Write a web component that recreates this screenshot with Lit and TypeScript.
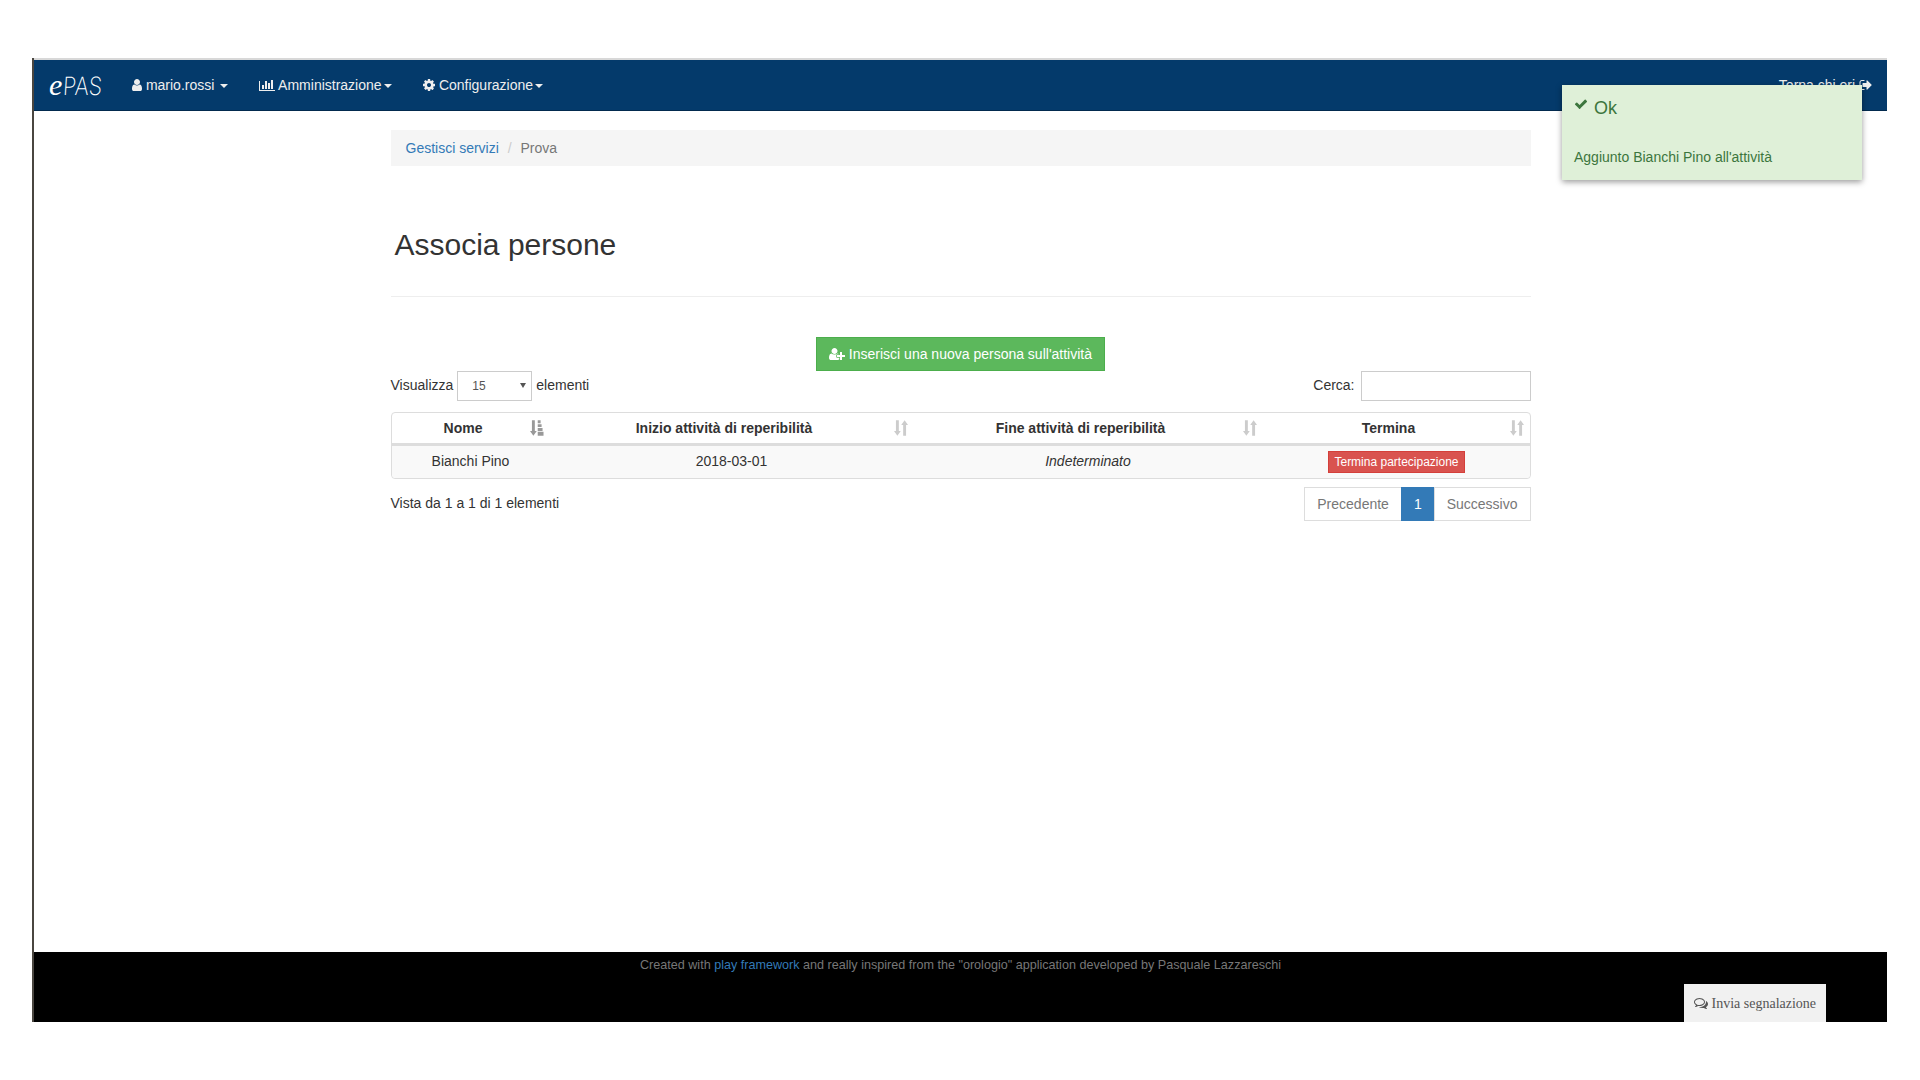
import { LitElement, html, css, svg } from "lit";
import { customElement } from "lit/decorators.js";

const icon = (vb: string, d: string, cls = "") =>
  html`<svg class="ic ${cls}" viewBox="${vb}" fill="currentColor"><path d="${d}"></path></svg>`;

const USER = "M1536 1399q0 109-62.5 187t-150.5 78h-854q-88 0-150.5-78t-62.5-187q0-85 8.5-160.5t31.5-152 58.5-131 94-89 134.5-34.5q131 128 313 128t313-128q76 0 134.5 34.5t94 89 58.5 131 31.5 152 8.5 160.5zm-256-887q0 159-112.5 271.5t-271.5 112.5-271.5-112.5-112.5-271.5 112.5-271.5 271.5-112.5 271.5 112.5 112.5 271.5z";
const COG = "M1152 896q0-106-75-181t-181-75-181 75-75 181 75 181 181 75 181-75 75-181zm512-109v222q0 12-8 23t-20 13l-185 28q-19 54-39 91 35 50 107 138 10 12 10 25t-9 23q-27 37-99 108t-94 71q-12 0-26-9l-138-108q-44 23-91 38-16 136-29 186-7 28-36 28h-222q-14 0-24.5-8.5t-11.5-21.5l-28-184q-49-16-90-37l-141 107q-10 9-25 9-14 0-25-11-126-114-165-168-7-10-7-23 0-12 8-23 15-21 51-66.5t54-70.5q-27-50-41-99l-183-27q-13-2-21-12.5t-8-23.5v-222q0-12 8-23t19-13l186-28q14-46 39-92-40-57-107-138-10-12-10-24 0-10 9-23 26-36 98.5-107.5t94.5-71.5q13 0 26 10l138 107q44-23 91-38 16-136 29-186 7-28 36-28h222q14 0 24.5 8.5t11.5 21.5l28 184q49 16 90 37l142-107q9-9 24-9 13 0 25 10 129 119 165 170 7 8 7 22 0 12-8 23-15 21-51 66.5t-54 70.5q26 50 41 98l183 28q13 2 21 12.5t8 23.5z";
const CHECK = "M1671 566q0 40-28 68l-724 724-136 136q-28 28-68 28t-68-28l-136-136-362-362q-28-28-28-68t28-68l136-136q28-28 68-28t68 28l294 295 656-657q28-28 68-28t68 28l136 136q28 28 28 68z";
const CHART = "M640 896v512h-256v-512h256zm384-512v1024h-256v-1024h256zm1024 1152v128h-2048v-1280h128v1152h1920zm-640-896v768h-256v-768h256zm384-384v1152h-256v-1152h256z";
const USERPLUS = "M704 896q-159 0-271.5-112.5t-112.5-271.5 112.5-271.5 271.5-112.5 271.5 112.5 112.5 271.5-112.5 271.5-271.5 112.5zm960 128h352q13 0 22.5 9.5t9.5 22.5v192q0 13-9.5 22.5t-22.5 9.5h-352v352q0 13-9.5 22.5t-22.5 9.5h-192q-13 0-22.5-9.5t-9.5-22.5v-352h-352q-13 0-22.5-9.5t-9.5-22.5v-192q0-13 9.5-22.5t22.5-9.5h352v-352q0-13 9.5-22.5t22.5-9.5h192q13 0 22.5 9.5t9.5 22.5v352zm-736 224q0 52 38 90t90 38h256v238q-68 50-171 50h-874q-121 0-194-69t-73-190q0-53 3.5-103.5t14-109 26.5-108.5 43-97.5 62-81 85.5-53.5 111.5-20q19 0 39 17 79 61 154.5 91.5t164.5 30.5 164.5-30.5 154.5-91.5q20-17 39-17 132 0 217 96h-223q-52 0-90 38t-38 90v192z";
const SIGNOUT = "M704 1440q0 4 1 20t.5 26.5-3 23.5-10 19.5-20.5 6.5h-320q-119 0-203.5-84.5t-84.5-203.5v-704q0-119 84.5-203.5t203.5-84.5h320q13 0 22.5 9.5t9.5 22.5q0 4 1 20t.5 26.5-3 23.5-10 19.5-20.5 6.5h-320q-66 0-113 47t-47 113v704q0 66 47 113t113 47h312l11.5 1 11.5 3 8 5.5 7 9 2 13.5zm928-544q0 26-19 45l-544 544q-19 19-45 19t-45-19-19-45v-288h-448q-26 0-45-19t-19-45v-384q0-26 19-45t45-19h448v-288q0-26 19-45t45-19 45 19l544 544q19 19 19 45z";
const COMMENTS = "M704 384q-153 0-286 52t-211.5 141-78.5 191q0 82 53 158t149 132l97 56-35 84q34-20 62-39l44-31 53 10q78 14 153 14 153 0 286-52t211.5-141 78.5-191-78.5-191-211.5-141-286-52zm0-128q191 0 353.5 68.5t256.5 186.5 94 257-94 257-256.5 186.5-353.5 68.5q-86 0-176-16-124 88-278 128-36 9-86 16h-3q-11 0-20.5-8t-11.5-21q-1-3-1-6.5t.5-6.5 2-6l2.5-5 3.5-5.5 4-5 4.5-5 4-4.5q5-6 23-25t26-29.5 22.5-29 25-38.5 20.5-44q-124-72-195-177t-71-224q0-139 94-257t256.5-186.5 353.5-68.5zm822 1169q10 24 20.5 44t25 38.5 22.5 29 26 29.5 23 25q1 1 4 4.5t4.5 5 4 5 3.5 5.5l2.5 5 2 6 .5 6.5-1 6.5q-3 14-13 22t-22 7q-50-7-86-16-154-40-278-128-90 16-176 16-271 0-472-132 58 4 88 4 161 0 309-45t264-129q125-92 192-212t67-254q0-77-23-152 129 71 204 178t75 230q0 120-71 224.5t-195 176.5z";

const arrowDown = svg`<path d="M2 0h3v11h2L3.500 16 0 11h2z"/>`;
const sortBoth = svg`${arrowDown}<path d="M9.500 16V5h-2L11 0l3.500 5h-2v11z"/>`;
const sortAsc = svg`${arrowDown}<path d="M8 0h3v3H8zM8 4h4v3H8zM8 8h5v3H8zM8 12h6v4H8z"/>`;

@customElement("app-root")
export class AppRoot extends LitElement {
  static styles = css`
    :host { display: block; font-family: "Liberation Sans", Arial, sans-serif; font-size: 14px; line-height: 20px; color: #333; }
    * { box-sizing: border-box; }
    a { text-decoration: none; color: #337ab7; }
    .page { padding: 58px 33px 58px 32px; }
    .frame { position: relative; height: 964px; display: flex; flex-direction: column; border-left: 2px solid #4a4640; background: #fff; }
    .ic { display: inline-block; width: 14px; height: 14px; vertical-align: -2px; }
    .ic.w10 { width: 10px; }
    .ic.w12 { width: 12px; }
    .ic.w16 { width: 16px; }
    .nav { height: 53px; flex: none; background: #043a6b; border-top: 2px solid #d8d8d8; border-bottom: 1px solid #022a4e; color: #eee; display: flex; align-items: center; }
    .logo { font-family: Inter, "Liberation Sans", sans-serif; font-weight: 200; font-size: 25px; width: 98px; padding-left: 15px; color: #fff; flex: none; white-space: nowrap; }
    .logo i { font-family: "Liberation Serif", serif; font-size: 30px; font-style: italic; font-weight: 400; margin-right: 1px; }
    .logo b { display: inline-block; font-weight: 200; transform: scaleX(.86) skewX(-4deg); transform-origin: left center; }
    .menu { display: flex; align-items: center; flex: 1; }
    .menu a { color: #eee; }
    .mi-1 { width: 127px; }
    .mi-2 { width: 164px; }
    .caret { display: inline-block; width: 0; height: 0; margin-left: 2px; vertical-align: middle; border-top: 4px solid; border-left: 4px solid transparent; border-right: 4px solid transparent; }
    .back { margin-left: auto; padding-right: 14px; }
    main { flex: 1; width: 1140px; margin: 0 auto; }
    .crumb { margin-top: 19px; height: 36px; padding: 8px 15px; background: #f5f5f5; color: #777; }
    .crumb i { font-style: normal; color: #ccc; padding: 0 5px; }
    h1 { margin: 62px 0 0 4px; font-size: 30px; font-weight: 500; line-height: 33px; color: #333; }
    hr { margin: 35px 0 0; border: 0; border-top: 1px solid #eee; }
    .center { margin-top: 40px; display: flex; justify-content: center; height: 34px; }
    .btn-add { display: block; height: 34px; padding: 6px 12px; background: #5cb85c; border: 1px solid #4cae4c; color: #fff; }
    .tools { display: flex; justify-content: space-between; align-items: center; height: 30px; }
    .len { display: flex; align-items: center; gap: 4px; }
    .lbl { margin-top: -2px; }
    .sel { position: relative; display: block; width: 75px; height: 30px; }
    .sel::after { content: ""; position: absolute; right: 6px; top: 12px; border-top: 5px solid #555; border-left: 3.5px solid transparent; border-right: 3.5px solid transparent; pointer-events: none; }
    select { display: block; appearance: none; -webkit-appearance: none; width: 75px; height: 30px; font: 12px "Liberation Sans", sans-serif; padding: 5px 14px; color: #555; border: 1px solid #ccc; background: #fff; border-radius: 0; }
    .srch { display: flex; align-items: center; gap: 6px; }
    .srch input { width: 170px; height: 30px; border: 1px solid #ccc; background: #fff; padding: 0 6px; }
    table { margin-top: 11px; width: 1140px; table-layout: fixed; border-collapse: separate; border-spacing: 0; border: 1px solid #ddd; border-radius: 4px; }
    col.c1 { width: 158px; } col.c2 { width: 364px; } col.c3 { width: 349px; } col.c4 { width: 267px; }
    th { padding: 5px 6px 5px 8px; font-weight: 700; border-bottom: 3px solid #ddd; }
    .th { display: flex; align-items: center; }
    .th span { flex: 1; text-align: center; }
    .sort { flex: none; width: 14px; height: 16px; margin-left: 3px; color: #ccc; }
    .sort.on { color: #999; }
    td { padding: 4px 8px 6px; text-align: center; background: #f9f9f9; height: 32px; }
    td.act { padding: 5px 8px; }
    tr td:first-child { border-bottom-left-radius: 4px; } tr td:last-child { border-bottom-right-radius: 4px; }
    .end { display: inline-block; vertical-align: middle; margin-left: 1px; font-size: 12px; line-height: 18px; padding: 1px 5px; background: #d9534f; border: 1px solid #d43f3a; color: #fff; }
    .foot { margin-top: 8px; display: flex; justify-content: space-between; }
    .info { padding-top: 6px; }
    .pager { display: flex; height: 34px; }
    .pager a { padding: 6px 12px; border: 1px solid #ddd; margin-left: -1px; color: #777; background: #fff; }
    .pager a.on { background: #337ab7; border-color: #337ab7; color: #fff; }
    footer { flex: none; height: 70px; background: #000; color: #777; font-size: 12.6px; line-height: 18px; text-align: center; padding-top: 4px; }
    .invia { position: absolute; right: 61px; bottom: 0; width: 142px; height: 38px; background: #f1f1f1; color: #555; font-family: "Liberation Serif", serif; font-size: 14px; padding: 10px 10px; white-space: nowrap; }
    .toast { position: absolute; left: 1528px; top: 27px; width: 300px; height: 95px; background: #dff0d8; color: #3c763d; box-shadow: 0 2px 6px rgba(0,0,0,.4); padding: 10px 12px; }
    .toast .t { display: flex; align-items: center; font-size: 18px; line-height: 26px; gap: 6px; }
    .toast .t .ic { width: 14px; height: 14px; margin-top: -8px; }
    .toast .m { margin-top: 26px; font-size: 14px; }
  `;

  th(label: string, on = false) {
    return html`<th><div class="th"><span>${label}</span>
      <svg class="sort ${on ? "on" : ""}" viewBox="0 0 14.500 16" fill="currentColor">${on ? sortAsc : sortBoth}</svg></div></th>`;
  }

  render() {
    return html`<div class="page"><div class="frame">
      <div class="nav">
        <div class="logo"><i>e</i><b>PAS</b></div>
        <div class="menu">
          <a class="mi-1">${icon("256 0 1280 1792", USER, "w10")} mario.rossi <span class="caret"></span></a>
          <a class="mi-2">${icon("0 0 2048 1792", CHART, "w16")} Amministrazione<span class="caret"></span></a>
          <a>${icon("128 0 1536 1792", COG, "w12")} Configurazione<span class="caret"></span></a>
          <a class="back">Torna chi eri ${icon("0 0 1792 1792", SIGNOUT)}</a>
        </div>
      </div>
      <main>
        <div class="crumb"><a>Gestisci servizi</a><i> / </i>Prova</div>
        <h1>Associa persone</h1>
        <hr />
        <div class="center"><a class="btn-add">${icon("0 0 2048 1792", USERPLUS, "w16")} Inserisci una nuova persona sull'attività</a></div>
        <div class="tools">
          <div class="len"><span class="lbl">Visualizza</span><span class="sel"><select><option>15</option></select></span><span class="lbl">elementi</span></div>
          <div class="srch"><span class="lbl">Cerca:</span><input type="text" /></div>
        </div>
        <table>
          <colgroup><col class="c1" /><col class="c2" /><col class="c3" /><col class="c4" /></colgroup>
          <thead><tr>${this.th("Nome", true)}${this.th("Inizio attività di reperibilità")}${this.th("Fine attività di reperibilità")}${this.th("Termina")}</tr></thead>
          <tbody><tr><td>Bianchi Pino</td><td>2018-03-01</td><td><em>Indeterminato</em></td><td class="act"><a class="end">Termina partecipazione</a></td></tr></tbody>
        </table>
        <div class="foot">
          <div class="info">Vista da 1 a 1 di 1 elementi</div>
          <div class="pager"><a>Precedente</a><a class="on">1</a><a>Successivo</a></div>
        </div>
      </main>
      <footer>Created with <a>play framework</a> and really inspired from the "orologio" application developed by Pasquale Lazzareschi</footer>
      <a class="invia">${icon("0 0 1792 1792", COMMENTS)} Invia segnalazione</a>
      <div class="toast">
        <div class="t">${icon("0 0 1792 1792", CHECK)}<span>Ok</span></div>
        <div class="m">Aggiunto Bianchi Pino all'attività</div>
      </div>
    </div></div>`;
  }
}
